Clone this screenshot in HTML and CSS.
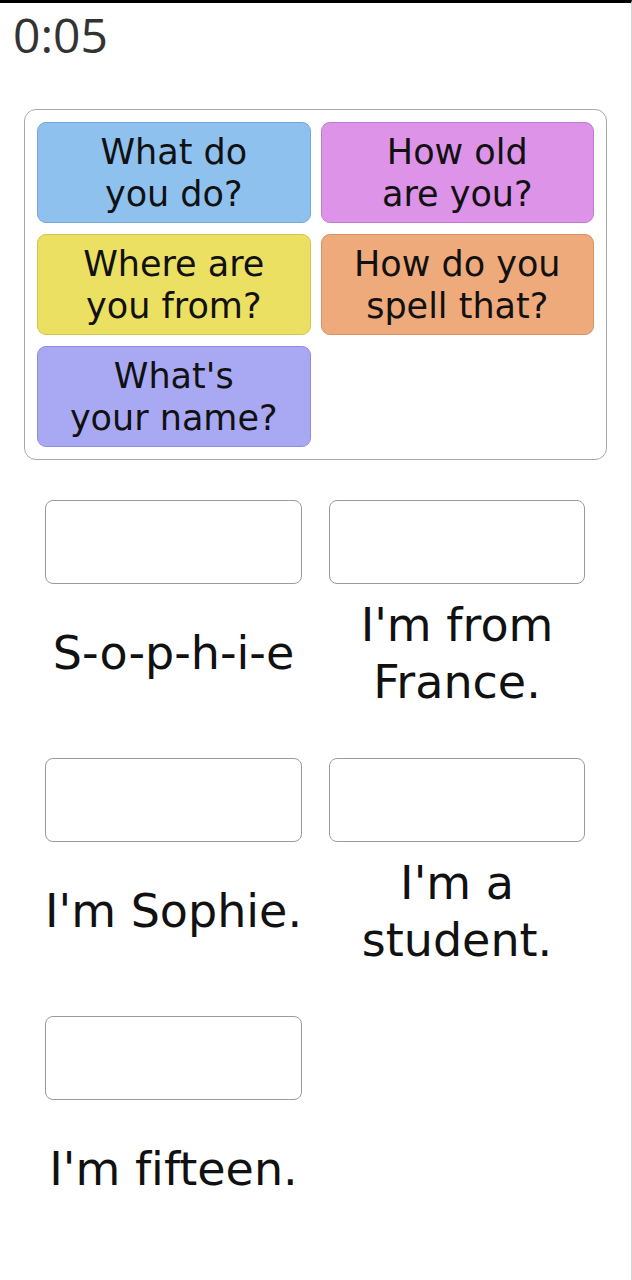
FILE: index.html
```html
<!DOCTYPE html>
<html lang="en">
<head>
<meta charset="utf-8">
<link rel="stylesheet" href="styles.css">
</head>
<body>
<div class="page">
  <div class="timer">0:05</div>
  <div class="bank">
    <div class="chip chip-blue">What do<br>you do?</div>
    <div class="chip chip-pink">How old<br>are you?</div>
    <div class="chip chip-yellow">Where are<br>you from?</div>
    <div class="chip chip-orange">How do you<br>spell that?</div>
    <div class="chip chip-lavender">What's<br>your name?</div>
  </div>
  <div class="answers">
    <div class="item"><div class="slot"></div><div class="label">S-o-p-h-i-e</div></div>
    <div class="item"><div class="slot"></div><div class="label">I'm from<br>France.</div></div>
    <div class="item"><div class="slot"></div><div class="label">I'm Sophie.</div></div>
    <div class="item"><div class="slot"></div><div class="label">I'm a<br>student.</div></div>
    <div class="item"><div class="slot"></div><div class="label">I'm fifteen.</div></div>
  </div>
</div>
</body>
</html>
```
FILE: styles.css
```css
html, body {
  margin: 0;
  padding: 0;
  background: #ffffff;
}
body {
  width: 632px;
  height: 1280px;
  box-sizing: border-box;
  border-top: 3px solid #000;
  border-right: 1px solid #d4d4d4;
  overflow: hidden;
}
.page {
  font-family: "DejaVu Sans", "Open Sans", sans-serif;
  color: #111;
}
.timer {
  margin: 5px 0 0 13px;
  font-family: "Open Sans", "Noto Sans", sans-serif;
  font-size: 48px;
  line-height: 54px;
  color: #333;
}
.bank {
  margin: 47px 0 0 24px;
  width: 583px;
  box-sizing: border-box;
  border: 1.5px solid #a8a8a8;
  border-radius: 12px;
  padding: 12px;
  display: grid;
  grid-template-columns: 1fr 1fr;
  column-gap: 10px;
  row-gap: 11px;
}
.chip {
  height: 101px;
  box-sizing: border-box;
  border-radius: 9px;
  border: 1px solid;
  display: flex;
  align-items: center;
  justify-content: center;
  text-align: center;
  font-size: 35px;
  line-height: 42px;
  padding-top: 1px;
  color: #111;
  font-feature-settings: "liga" 0;
}
.chip-blue { background: #8ec1ee; border-color: #72a8da; }
.chip-pink { background: #dc93e8; border-color: #c37ad1; }
.chip-yellow { background: #ece063; border-color: #d2c44d; }
.chip-orange { background: #efaa7c; border-color: #d89265; }
.chip-lavender { background: #a9a9f3; border-color: #8e8ee0; }
.answers {
  margin: 40px 47px 0 45px;
  display: grid;
  grid-template-columns: 257px 256px;
  column-gap: 27px;
  row-gap: 35px;
}
.item {
  display: flex;
  flex-direction: column;
}
.slot {
  height: 84px;
  box-sizing: border-box;
  border: 1.5px solid #9a9a9a;
  border-radius: 8px;
}
.label {
  height: 139px;
  display: flex;
  align-items: center;
  justify-content: center;
  text-align: center;
  font-size: 46px;
  line-height: 57px;
  color: #111;
  white-space: nowrap;
  font-feature-settings: "liga" 0;
}
```
